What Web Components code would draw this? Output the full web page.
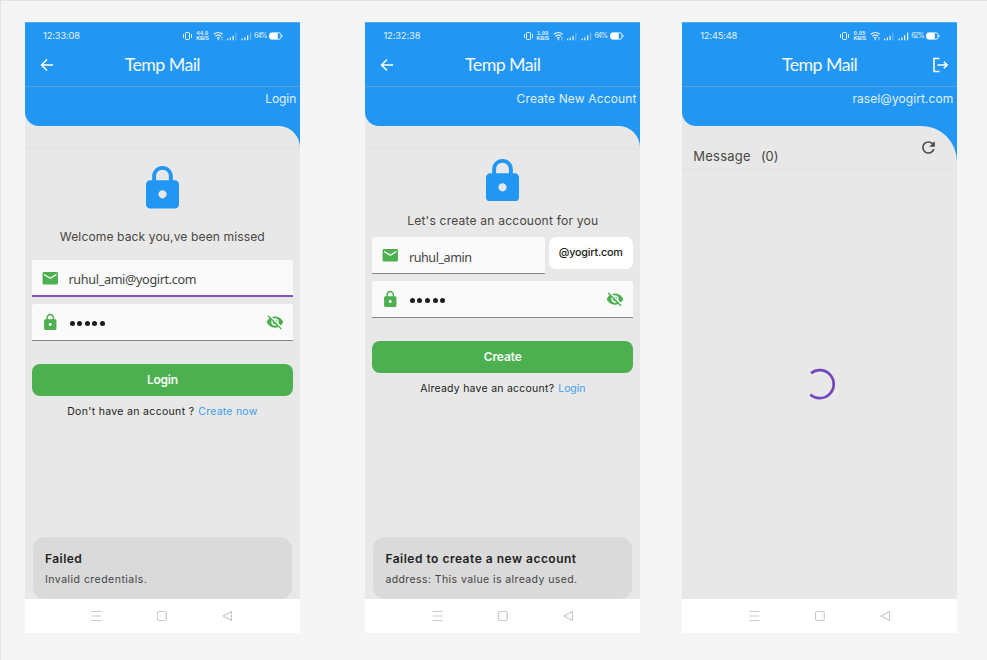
<!DOCTYPE html>
<html lang="en"><head><meta charset="utf-8"><title>Temp Mail</title>
<style>
html,body{margin:0}
body{width:987px;height:660px;box-sizing:border-box;background:#f5f5f5;border-top:1px solid #e4e4e4;border-left:1px solid #e4e4e4;overflow:hidden}
main{display:flex;padding:21px 0 0 24px}
#create{margin-left:65.700px}
#inbox{margin-left:42.200px}
</style></head><body>
<main>
<phone-frame id="login">
  <status-bar slot="top" time="12:33:08" speed="44.0" battery="64%"></status-bar>
  <app-bar slot="top" back></app-bar>
  <page-banner slot="top" width="31">Login</page-banner>
  <hero-lock style="padding-top:17px"></hero-lock>
  <text-line style="margin-top:20px;--size:12.100px;--ink:#4a4744" width="205">Welcome back you,ve been missed</text-line>
  <text-field icon="mail" focus style="margin:15px 7px 0" width="128">ruhul_ami@yogirt.com</text-field>
  <text-field icon="lock" secret style="margin:6.500px 7px 0"></text-field>
  <main-button width="31">Login</main-button>
  <link-line><text-line slot="a" width="127">Don't have an account ?</text-line><text-line width="59">Create now</text-line></link-line>
  <toast-card slot="bottom"><text-line slot="title" width="37">Failed</text-line><text-line width="102">Invalid credentials.</text-line></toast-card>
</phone-frame>
<phone-frame id="create">
  <status-bar slot="top" time="12:32:38" speed="1.00" battery="64%"></status-bar>
  <app-bar slot="top" back></app-bar>
  <page-banner slot="top" width="120">Create New Account</page-banner>
  <hero-lock style="padding-top:9.500px"></hero-lock>
  <text-line style="margin-top:11.500px;--size:12.100px;--ink:#4a4744" width="191">Let's create an accouont for you</text-line>
  <field-row><text-field icon="mail" width="63">ruhul_amin</text-field><domain-chip slot="end"><text-line width="64">@yogirt.com</text-line></domain-chip></field-row>
  <text-field icon="lock" secret style="margin:6.500px 7px 0"></text-field>
  <main-button width="38">Create</main-button>
  <link-line><text-line slot="a" width="134">Already have an account?</text-line><text-line width="27">Login</text-line></link-line>
  <toast-card slot="bottom"><text-line slot="title" width="191">Failed to create a new account</text-line><text-line width="192">address: This value is already used.</text-line></toast-card>
</phone-frame>
<phone-frame id="inbox" tall>
  <status-bar slot="top" time="12:45:48" speed="0.05" battery="62%"></status-bar>
  <app-bar slot="top" exit></app-bar>
  <page-banner slot="top" width="101">rasel@yogirt.com</page-banner>
  <message-head slot="notch"></message-head>
  <load-ring></load-ring>
</phone-frame>
</main>
<script>
const define=(name,markup,setup)=>customElements.define(name,class extends HTMLElement{
  connectedCallback(){
    if(this.shadowRoot)return;
    const r=this.attachShadow({mode:'open'});
    r.innerHTML=typeof markup==='function'?markup(this):markup;
    if(setup)setup(this,r);
  }
});
const LOCK='M18 8h-1V6c0-2.760-2.240-5-5-5S7 3.240 7 6v2H6c-1.100 0-2 .9-2 2v10c0 1.100.9 2 2 2h12c1.100 0 2-.9 2-2V10c0-1.100-.9-2-2-2zm-6 9c-1.100 0-2-.9-2-2s.9-2 2-2 2 .9 2 2-.9 2-2 2zm3.100-9H8.900V6c0-1.710 1.390-3.100 3.100-3.100s3.100 1.390 3.100 3.100v2z';
const MAIL='M20 4H4c-1.100 0-2 .9-2 2v12c0 1.100.9 2 2 2h16c1.100 0 2-.9 2-2V6c0-1.100-.9-2-2-2zm0 4l-8 5-8-5V6l8 5 8-5v2z';
const EYE='M12 7c2.760 0 5 2.240 5 5 0 .65-.13 1.260-.36 1.830l2.920 2.920c1.510-1.260 2.700-2.890 3.430-4.750-1.730-4.390-6-7.500-11-7.500-1.400 0-2.740.25-3.980.7l2.160 2.160C10.740 7.130 11.350 7 12 7zM2 4.270l2.280 2.280.46.46C3.080 8.300 1.780 10.020 1 12c1.730 4.390 6 7.500 11 7.500 1.550 0 3.030-.3 4.380-.84l.42.42L19.730 22 21 20.730 3.270 3 2 4.270zM7.530 9.800l1.550 1.550c-.05.21-.08.43-.08.65 0 1.660 1.340 3 3 3 .22 0 .44-.03.65-.08l1.550 1.550c-.67.33-1.410.53-2.200.53-2.760 0-5-2.240-5-5 0-.79.2-1.530.53-2.200zm4.310-.78l3.150 3.150.02-.16c0-1.660-1.340-3-3-3l-.17.01z';
const REFRESH='M17.650 6.350C16.200 4.900 14.210 4 12 4c-4.420 0-7.990 3.580-7.990 8s3.570 8 7.990 8c3.730 0 6.840-2.550 7.730-6h-2.080c-.82 2.330-3.040 4-5.650 4-3.310 0-6-2.690-6-6s2.690-6 6-6c1.660 0 3.140.69 4.220 1.780L13 11h7V4l-2.350 2.350z';
const icon=(d,size,color)=>`<svg width="${size}" height="${size}" viewBox="0 0 24 24" fill="${color}"><path d="${d}"/></svg>`;

define('phone-frame',h=>{const t=h.hasAttribute('tall');return `<style>
:host{display:flex;flex-direction:column;width:274.700px;height:611px;flex:none;background:#e8e8e8;font-family:Inter,sans-serif;color:#222}
header{box-sizing:border-box;background:#2296f3;height:104px;border-radius:0 0 0 14px;border-top:1px solid #4fabf5}
.curve{background:linear-gradient(#2296f3,#2296f3) right top/40px ${t?36:22}px no-repeat;border-bottom:1px solid #dde2e6;box-sizing:border-box;height:${t?44:23}px}
.curve div{background:#e8e8e8;height:100%;border-top-right-radius:${t?'35px 36px':'21px 22px'}}
section{flex:1}
</style><header><slot name="top"></slot></header><div class="curve"><div><slot name="notch"></slot></div></div><section><slot></slot></section><slot name="bottom"></slot><nav-keys></nav-keys>`});
define('status-bar',h=>`<style>
:host{display:flex;align-items:center;height:26px;padding:0 16.500px 0 18px;color:#e4f2fe;font:9.300px Inter,sans-serif}
text-line{line-height:12px}.sp{flex:1}svg{display:block;flex:none}
.rate{font:bold 5.400px/5px "Liberation Sans",sans-serif;text-align:center;width:12.500px;margin:0 4px 0 4px;--line:5px}
.pc{font-size:7.200px;width:13px;margin-right:2.500px}
</style><text-line width="37">${h.getAttribute('time')}</text-line><div class="sp"></div>
<svg width="9" height="10" fill="none" stroke="#e4f2fe"><rect x="2.500" y="1.500" width="4" height="7" rx=".8"/><path d="M.5 3v4M8.500 3v4" stroke-width=".9"/></svg>
<div class="rate"><text-line width="11.500">${h.getAttribute('speed')}</text-line><text-line width="12.500">KB/S</text-line></div>
<svg width="41" height="12" viewBox="0 0 41 12"><g fill="none" stroke="#e4f2fe" stroke-width="1.200"><path d="M.8 4.200Q5.300 .8 9.800 4.200M2.400 6.300Q5.300 4 8.200 6.300M4 8.200Q5.300 7.200 6.600 8.200"/></g><path fill="#e4f2fe" d="M4.700 9h1.300v1.200H4.700zM8.500 7h1v1.500h-1zM8.500 9.200h1v1h-1zM14 8.500h1.300v1.700H14zM16.700 7.500h1.300v2.700h-1.300zM19.500 5.700h1.300v4.500h-1.300zM28.500 8.500h1.300v1.700h-1.300zM31.200 7.500h1.300v2.700h-1.300zM34 5.200h1.300v5H34z"/><path fill="#e4f2fe" opacity=".4" d="M22.300 2.500h1v7.700h-1z"/><path fill="#e4f2fe" opacity="${h.getAttribute('battery')==='62%'?1:.4}" d="M37 2.500h1.200v7.700H37z"/></svg>
<text-line class="pc" width="13">${h.getAttribute('battery')}</text-line>
<svg width="14" height="8"><rect x=".5" y=".8" width="11.500" height="6.400" rx="2" fill="none" stroke="#e4f2fe"/><rect x="1" y="1" width="7.800" height="6" rx="1.300" fill="#fff"/><path d="M13 3v2" stroke="#e4f2fe"/></svg>`);
define('app-bar',h=>`<style>
:host{display:grid;grid-template-columns:44px 1fr 44px;height:31px;padding-bottom:6px;align-items:center;border-bottom:1px solid #5b9fd6;color:#fff}
text-line{font:17.800px Lato,sans-serif;color:#f2f9ff;padding-bottom:2px}
svg{display:block}.e{justify-self:end;margin-right:7.500px}
</style><span>${h.hasAttribute('back')?'<svg style="margin-left:15px" width="14" height="14" viewBox="0 0 14 14" fill="none" stroke="#fff" stroke-width="1.500"><path d="M13 7H1.600M7 1.500 1.500 7 7 12.500"/></svg>':''}</span><text-line width="75.500">Temp Mail</text-line><span class="e">${h.hasAttribute('exit')?'<svg width="17" height="16" viewBox="0 0 17 16" fill="none" stroke="#fff" stroke-width="1.600"><path d="M7.500 1.500H2v13h5.500M5.500 8H15M11.800 4.700 15.200 8l-3.400 3.300"/></svg>':''}</span>`);
define('page-banner',h=>`<style>:host{display:flex;justify-content:flex-end;padding:4px 3.500px 0 0;color:#e0f0ff;font-size:12px}</style><text-line width="${h.getAttribute('width')}">${h.textContent}</text-line>`);
define('hero-lock',`<style>:host{display:flex;justify-content:center}svg{display:block;height:42.500px;width:33px}</style><svg viewBox="4 1 16 21" preserveAspectRatio="none" fill="#2296f3"><path d="${LOCK}"/></svg>`);
define('text-field',h=>`<style>
:host{display:flex;align-items:center;box-sizing:border-box;height:37.500px;flex:1;background:#fafafa;border-radius:3px 3px 0 0;border-bottom:${h.hasAttribute('focus')?'2px solid #7e57c2':'1px solid #85858a'};padding:${h.hasAttribute('secret')?0:1}px 9px 0}
svg{display:block;flex:none}.v{flex:1;display:flex;padding:5px 0 0 9px;font:12.600px "Noto Sans",sans-serif;color:#444}
i{width:5px;height:5px;border-radius:50%;background:#1d1d1d;margin-right:2.600px}.dots{padding:3px 0 0 10px}
</style>${icon(h.getAttribute('icon')==='mail'?MAIL:LOCK,18.500,'#4caf50')}${h.hasAttribute('secret')?'<div class="v dots"><i></i><i></i><i></i><i></i><i></i></div>'+icon(EYE,18,'#4caf50'):`<div class="v"><text-line width="${h.getAttribute('width')}">${h.textContent}</text-line></div>`}`);
define('field-row',`<style>:host{display:flex;gap:4px;margin:8px 7px 0;align-items:flex-start}</style><slot></slot><slot name="end"></slot>`);
define('domain-chip',`<style>:host{display:flex;align-items:center;justify-content:center;box-sizing:border-box;width:84.500px;height:32px;padding-top:1px;background:#fff;border-radius:7px;font-size:10.800px;font-weight:500;color:#222}</style><slot></slot>`);
define('main-button',h=>`<style>:host{display:flex;align-items:center;justify-content:center;box-sizing:border-box;height:32.500px;padding-top:1px;margin:22.500px 7px 0;background:#4caf50;border-radius:8px;color:#f4fbf4;font-size:12px;font-weight:600}</style><text-line width="${h.getAttribute('width')}">${h.textContent}</text-line>`);
define('link-line',`<style>:host{display:flex;justify-content:center;gap:4px;padding-top:7.500px;font-size:10.500px}.l{color:#3fa0ee}</style><slot name="a"></slot><span class="l"><slot></slot></span>`);
define('toast-card',`<style>:host{display:flex;flex-direction:column;align-items:flex-start;box-sizing:border-box;margin:0 8px;height:62px;background:#dadada;border-radius:12px;padding:14px 12px 0;gap:5px;font-size:10.500px;color:#444}.t{font-size:12px;font-weight:600;color:#222}</style><div class="t"><slot name="title"></slot></div><slot></slot>`);
define('message-head',`<style>:host{display:flex;height:43px;align-items:flex-start;justify-content:space-between;padding:0 18.500px 0 11px;font-size:13px;color:#494745}.m{display:flex;gap:10px;padding-top:22px}svg{display:block;margin-top:12px}</style><div class="m"><text-line width="57.500">Message</text-line><text-line width="17.500">(0)</text-line></div>${icon(REFRESH,19,'#4a4a4c')}`);
define('load-ring',`<style>:host{display:flex;justify-content:center;padding-top:197px}svg{display:block}</style><svg width="34" height="34" viewBox="0 0 34 34" fill="none" stroke="#7446bd" stroke-width="2.700"><path d="M8 6.200A14 14 0 1 1 7.300 27.500"/></svg>`);
define('nav-keys',`<style>:host{display:flex;height:34px;background:#fff;align-items:center;justify-content:center}svg{display:block}</style><svg width="142" height="12" viewBox="0 0 142 12" fill="none" stroke="#c9c9c9" stroke-width="1.200"><path d="M.5 1.500h10M.5 6h10M.5 10.500h10"/><rect x="66.500" y="1.500" width="8.800" height="9" rx="1.500"/><path d="M140.500 1.500v9L132 6z" stroke-linejoin="round"/></svg>`);

/* A single line whose tracking is spread to reach the given width.
   Registered last, so that the styles it inherits are in place when it measures. */
define('text-line',`<style>:host{display:block;text-align:center;white-space:nowrap;font-size:var(--size,inherit);color:var(--ink,inherit)}span{display:block;width:max-content;margin:0 auto;line-height:var(--line,16px)}</style><span><slot></slot></span>`,(h,r)=>{
  const s=r.querySelector('span'),w=+h.getAttribute('width'),n=h.textContent.length;
  if(w)s.style.letterSpacing=((w-s.getBoundingClientRect().width)/(n-.5)).toFixed(3)+'px';
});
</script></body></html>
